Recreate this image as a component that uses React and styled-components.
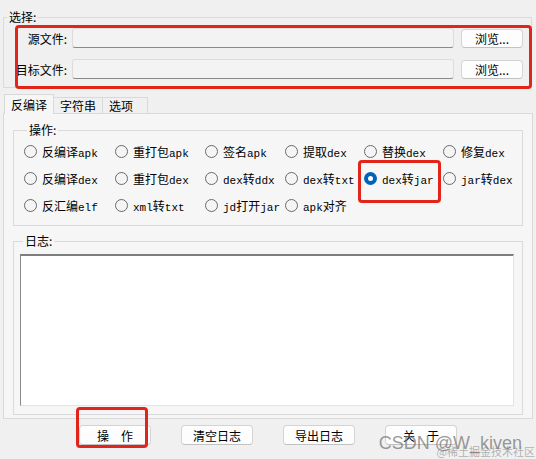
import styled, { createGlobalStyle, css } from 'styled-components';

const GlobalStyle = createGlobalStyle`
  html, body {
    margin: 0;
    padding: 0;
    background: #f0f0f0;
  }

  body {
    font-family: "Noto Sans CJK SC", "Noto Sans", sans-serif;
    font-size: 12px;
    color: #000;
  }
`;

const Window = styled.div`
  position: relative;
  width: 536px;
  height: 459px;
  box-sizing: border-box;
  padding-top: 9px;
  overflow: hidden;
  background: #f0f0f0;
`;

const GroupBox = styled.fieldset`
  margin: 0;
  min-inline-size: 0;
  border: 1px solid #dadada;
  box-sizing: border-box;
`;

const Legend = styled.legend`
  padding: 0 2px;
  margin-left: 3px;
  line-height: 16px;
  font-size: 12px;
`;

const SelectGroup = styled(GroupBox)`
  margin: 0 4px 0 3px;
  padding: 3px 8px 8px 0;
  display: flex;
  flex-direction: column;
  gap: 11px;
`;

const FileRow = styled.div`
  display: flex;
  align-items: center;
  height: 20px;
`;

const FileLabel = styled.label`
  width: 68px;
  padding-right: 5px;
  box-sizing: border-box;
  text-align: right;
  white-space: nowrap;
`;

const PathInput = styled.input`
  flex: 1;
  height: 20px;
  box-sizing: border-box;
  margin: 0;
  background: #f3f3f3;
  border: 1px solid #dcdcdc;
  border-bottom-color: #8a8a8a;
  border-radius: 3px;
  outline: none;
`;

const WinButton = styled.button`
  height: 20px;
  box-sizing: border-box;
  margin: 0;
  padding: 0;
  font-family: inherit;
  font-size: 12px;
  color: #000;
  background: #fdfdfd;
  border: 1px solid #d4d4d4;
  border-bottom-color: #c2c2c2;
  border-radius: 4px;
  white-space: pre;
  width: ${(p) => p.$w}px;
  ${(p) =>
    p.$inline &&
    css`
      margin-left: 7px;
      height: 19px;
    `}
`;

const TabStrip = styled.div`
  display: flex;
  align-items: flex-end;
  height: 19px;
  margin: 6px 0 0 4px;
  position: relative;
  z-index: 1;
`;

const Tab = styled.div`
  min-width: 45px;
  box-sizing: border-box;
  padding: 0 6px;
  font-size: 12px;
  border: 1px solid #d9d9d9;
  border-bottom: none;
  ${(p) =>
    p.$active
      ? css`
          height: 20px;
          line-height: 19px;
          background: #f6f6f6;
          margin-bottom: -1px;
        `
      : css`
          height: 16px;
          line-height: 15px;
          background: #f0f0f0;
          border-left: none;
        `}
`;

const TabPanel = styled.div`
  margin: 0 3px 0 3px;
  padding: 8px 9px 3px 9px;
  border: 1px solid #d9d9d9;
  background: #f6f6f6;
`;

const OpGroup = styled(GroupBox)`
  padding: 0 0 6px 10px;
`;

const OptionGrid = styled.div`
  display: grid;
  grid-template-columns: 91px 90px 80px 79px 79px 1fr;
  grid-auto-rows: 27px;
  align-items: center;
`;

const OptionItem = styled.label`
  display: flex;
  align-items: center;
  gap: 5px;
  white-space: nowrap;
  font-size: 12px;
`;

const RadioDot = styled.span`
  width: 13px;
  height: 13px;
  box-sizing: border-box;
  border-radius: 50%;
  flex: none;
  display: flex;
  align-items: center;
  justify-content: center;
  ${(p) =>
    p.$checked
      ? css`
          background: #0063b8;
          &::after {
            content: '';
            width: 5px;
            height: 5px;
            border-radius: 50%;
            background: #fff;
          }
        `
      : css`
          background: #f5f5f5;
          border: 1px solid #6a6a6a;
        `}
`;

const Latin = styled.span`
  font-family: "Liberation Mono", monospace;
  font-size: 11px;
`;

const LogGroup = styled(GroupBox)`
  margin-top: 7px;
  padding: 5px 8px 8px 6px;
`;

const LogArea = styled.textarea`
  display: block;
  width: 100%;
  height: 152px;
  box-sizing: border-box;
  margin: 0;
  resize: none;
  background: #fff;
  border: 1px solid #e3e3e3;
  border-top: 2px solid #7d7d7d;
  border-left: 1px solid #8a8a8a;
  outline: none;
`;

const ButtonBar = styled.div`
  display: flex;
  justify-content: center;
  gap: 30px;
  margin-top: 6px;
`;

const RedMark = styled.div`
  position: absolute;
  left: ${(p) => p.$x}px;
  top: ${(p) => p.$y}px;
  width: ${(p) => p.$w}px;
  height: ${(p) => p.$h}px;
  box-sizing: border-box;
  border: 3px solid #e3241b;
  border-radius: 4px;
  pointer-events: none;
`;

const Watermark = styled.div`
  position: absolute;
  right: 14px;
  bottom: 6px;
  font-family: "Liberation Sans", Arial, sans-serif;
  font-size: 18px;
  line-height: 20px;
  color: rgba(110, 110, 110, 0.7);
  white-space: nowrap;
  pointer-events: none;
`;

const SubMark = styled.div`
  position: absolute;
  right: 1px;
  bottom: 2px;
  font-size: 11px;
  line-height: 12px;
  color: rgba(120, 120, 120, 0.55);
  white-space: nowrap;
  pointer-events: none;
`;

const options = [
  '反编译apk', '重打包apk', '签名apk', '提取dex', '替换dex', '修复dex',
  '反编译dex', '重打包dex', 'dex转ddx', 'dex转txt', 'dex转jar', 'jar转dex',
  '反汇编elf', 'xml转txt', 'jd打开jar', 'apk对齐',
];

function Option({ label, checked }) {
  const parts = label.split(/([A-Za-z]+)/).filter(Boolean);
  return (
    <OptionItem>
      <RadioDot $checked={checked} />
      <span>
        {parts.map((s, i) => (/[A-Za-z]/.test(s) ? <Latin key={i}>{s}</Latin> : s))}
      </span>
    </OptionItem>
  );
}

export default function App() {
  return (
    <>
      <GlobalStyle />
      <Window>
        <SelectGroup>
          <Legend>选择:</Legend>
          <FileRow>
            <FileLabel>源文件:</FileLabel>
            <PathInput />
            <WinButton $w={62} $inline>浏览...</WinButton>
          </FileRow>
          <FileRow>
            <FileLabel>目标文件:</FileLabel>
            <PathInput />
            <WinButton $w={62} $inline>浏览...</WinButton>
          </FileRow>
        </SelectGroup>

        <TabStrip>
          <Tab $active>反编译</Tab>
          <Tab>字符串</Tab>
          <Tab>选项</Tab>
        </TabStrip>
        <TabPanel>
          <OpGroup>
            <Legend>操作:</Legend>
            <OptionGrid>
              {options.map((o) => (
                <Option key={o} label={o} checked={o === 'dex转jar'} />
              ))}
            </OptionGrid>
          </OpGroup>
          <LogGroup>
            <Legend>日志:</Legend>
            <LogArea />
          </LogGroup>
        </TabPanel>

        <ButtonBar>
          <WinButton $w={72}>操　作</WinButton>
          <WinButton $w={72}>清空日志</WinButton>
          <WinButton $w={72}>导出日志</WinButton>
          <WinButton $w={72}>关　于</WinButton>
        </ButtonBar>

        <RedMark $x={15} $y={25} $w={517} $h={64} />
        <RedMark $x={358} $y={160} $w={83} $h={43} />
        <RedMark $x={76} $y={407} $w={72} $h={41} />
        <Watermark>CSDN @W_kiven</Watermark>
        <SubMark>@稀土掘金技术社区</SubMark>
      </Window>
    </>
  );
}
